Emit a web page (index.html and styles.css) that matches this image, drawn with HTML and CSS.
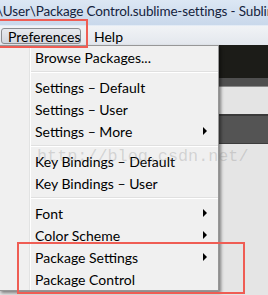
FILE: index.html
```html
<!DOCTYPE html>
<html lang="en">
<head>
    <meta charset="UTF-8">
    <title>Preferences menu</title>
    <link rel="stylesheet" href="styles.css">
</head>
<body>
    <div class="window">
        <div class="titlebar">\User\Package Control.sublime-settings - Sublime Text</div>
        <div class="menubar">
            <span class="menu-title active">Preferences</span>
            <span class="menu-title">Help</span>
        </div>
        <div class="editor">
            <div class="band dark"></div>
            <div class="band tab"></div>
            <div class="band light"></div>
            <div class="band panel"></div>
            <div class="band rest"></div>
        </div>

        <ul class="dropdown">
            <li class="item">Browse Packages...</li>
            <li class="sep"></li>
            <li class="item">Settings – Default</li>
            <li class="item">Settings – User</li>
            <li class="item sub">Settings – More</li>
            <li class="sep"></li>
            <li class="item">Key Bindings – Default</li>
            <li class="item">Key Bindings – User</li>
            <li class="sep"></li>
            <li class="item sub">Font</li>
            <li class="item sub">Color Scheme</li>
            <li class="item sub">Package Settings</li>
            <li class="item">Package Control</li>
        </ul>

        <div class="watermark">http://blog.csdn.net/</div>
        <div class="mark mark-menu"></div>
        <div class="mark mark-items"></div>
    </div>
</body>
</html>
```

FILE: styles.css
```css
:root {
    --menu-bg: #f0f0f0;
    --red: #ef5d54;
    --text: #000000;
}
body {
    margin: 0;
    font-family: 'Lato', 'Noto Sans', sans-serif;
    font-size: 14px;
    color: var(--text);
    overflow: hidden;
}
.window {
    position: relative;
    width: 268px;
    height: 295px;
    overflow: hidden;
    background-color: #e4e4e4;
}
.titlebar {
    height: 26px;
    line-height: 23px;
    margin-left: -3px;
    font-size: 13.5px;
    letter-spacing: -0.15px;
    white-space: nowrap;
    color: #14233d;
    background: linear-gradient(#dce7f4, #c9d8eb);
    border-bottom: 1px solid #e3ebf5;
    box-sizing: border-box;
}
.menubar {
    display: flex;
    align-items: center;
    gap: 7px;
    height: 19px;
    padding-left: 1px;
    background: linear-gradient(#f1f3f6, #e3e7ed);
}
.menu-title {
    padding: 0 5px;
    height: 16px;
    line-height: 15px;
    border: 1px solid transparent;
    border-radius: 3px;
    box-sizing: border-box;
}
.menu-title.active {
    width: 80px;
    padding: 0 6px;
    border-color: #8b8d91;
    background: linear-gradient(#e7e9ee, #d3d7df);
}
.editor {
    display: flex;
    flex-direction: column;
    height: 250px;
}
.band.dark {
    height: 33px;
    background-color: #1c1c18;
}
.band.tab {
    height: 8px;
    background-color: #4f4f4f;
    border-bottom: 1px solid #8a8a8a;
}
.band.light {
    height: 27px;
    background-color: #e4e4e4;
    border-bottom: 2px solid #3a3a3a;
}
.band.panel {
    height: 27px;
    background-color: #545454;
    border-bottom: 1px solid #3c3c3c;
}
.band.rest {
    flex: 1;
    background-color: #e5e5e5;
}
.dropdown {
    position: absolute;
    left: -1px;
    top: 45px;
    width: 218px;
    margin: 0;
    padding: 0;
    list-style: none;
    border: 1px solid #979797;
    background: linear-gradient(to right, var(--menu-bg) 29px, #e2e3e3 29px, #e2e3e3 30px, #ffffff 30px, #ffffff 31px, var(--menu-bg) 31px);
    box-shadow: 2px 2px 3px rgba(0, 0, 0, 0.45);
}
.item {
    display: flex;
    align-items: center;
    height: 22px;
    padding-left: 35px;
    white-space: nowrap;
}
.item.sub::after {
    content: "";
    margin-left: auto;
    margin-right: 11px;
    border-left: 4px solid #000;
    border-top: 4px solid transparent;
    border-bottom: 4px solid transparent;
}
.sep {
    height: 8px;
    margin-left: 31px;
    background: linear-gradient(transparent 3px, #e0e0e0 3px, #e0e0e0 4px, #ffffff 4px, #ffffff 5px, transparent 5px);
}
.watermark {
    position: absolute;
    left: 37px;
    top: 147px;
    font-family: 'Liberation Mono', monospace;
    font-size: 16.8px;
    color: rgba(120, 120, 120, 0.25);
    pointer-events: none;
}
.mark {
    position: absolute;
    border: 2px solid var(--red);
}
.mark-menu {
    left: -2px;
    top: 19px;
    width: 86px;
    height: 25px;
}
.mark-items {
    left: 17px;
    top: 242px;
    width: 224px;
    height: 48px;
}
```
